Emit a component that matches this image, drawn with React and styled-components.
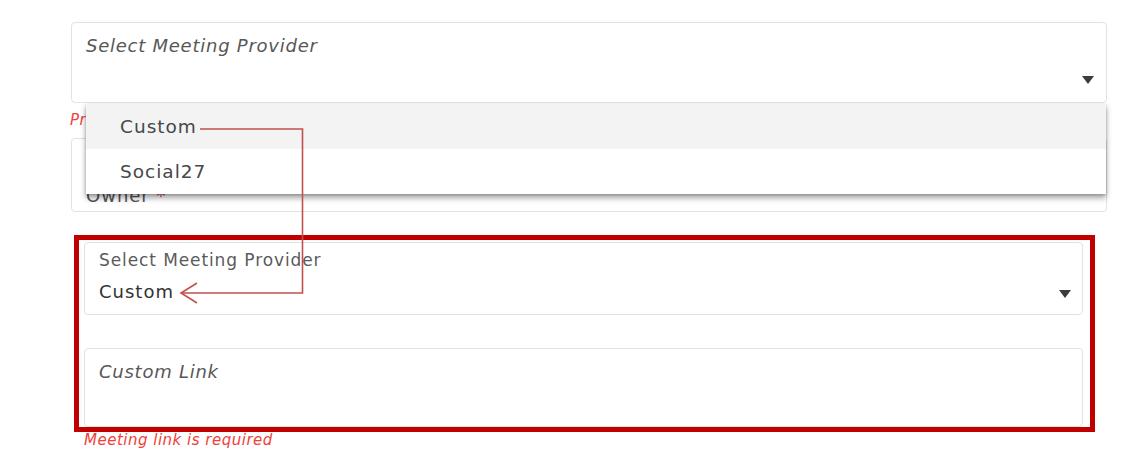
import styled, { createGlobalStyle } from "styled-components";

const GlobalStyle = createGlobalStyle`
  html, body {
    margin: 0;
    padding: 0;
    background: #ffffff;
  }
  body {
    font-family: "DejaVu Sans", "Open Sans", sans-serif;
  }
`;

const Page = styled.main`
  position: relative;
  width: 1143px;
  height: 468px;
  overflow: hidden;
  padding: 22px 0 0 71px;
  box-sizing: border-box;
`;

const Form = styled.div`
  width: 1036px;
  display: flex;
  flex-direction: column;
`;

const Field = styled.div`
  position: relative;
  box-sizing: border-box;
  height: ${(p) => p.$height}px;
  border: 1px solid #e2e2e2;
  border-radius: 4px;
  padding: ${(p) => p.$padTop}px 15px 0 14px;
  background: #fff;
`;

const Placeholder = styled.div`
  font-style: italic;
  font-size: 18px;
  letter-spacing: 0.75px;
  color: #575757;
  line-height: 24px;
`;

const Label = styled.div`
  font-size: 17px;
  letter-spacing: 0.9px;
  color: #5a5a5a;
  line-height: 22px;
`;

const Value = styled.div`
  font-size: 18px;
  letter-spacing: 1px;
  color: #333;
  line-height: 24px;
  margin-top: 9px;
`;

const Caret = styled.span`
  position: absolute;
  right: ${(p) => p.$right}px;
  top: ${(p) => p.$top}px;
  width: 0;
  height: 0;
  border-left: 6px solid transparent;
  border-right: 6px solid transparent;
  border-top: 8px solid #3c3c3c;
`;

const ErrorText = styled.div`
  font-style: italic;
  font-size: 15px;
  letter-spacing: 0.5px;
  color: #f0413a;
  line-height: 20px;
  margin: ${(p) => p.$margin};
`;

const OwnerText = styled.div`
  position: absolute;
  left: 14px;
  bottom: 3px;
  font-size: 18px;
  letter-spacing: 1px;
  color: #555;
  line-height: 24px;

  span {
    color: #e53935;
  }
`;

const Highlight = styled.section`
  box-sizing: border-box;
  width: 1021px;
  margin: 23px 0 0 3px;
  border: 5px solid #c00000;
  padding: 2px 7px 0 5px;
  display: flex;
  flex-direction: column;
  gap: 33px;
  height: 197px;
`;

const Menu = styled.ul`
  position: absolute;
  left: 86px;
  top: 104px;
  width: 1020px;
  margin: 0;
  padding: 0;
  list-style: none;
  background: #fff;
  box-shadow: 0 4px 6px rgba(0, 0, 0, 0.35), 0 1px 3px rgba(0, 0, 0, 0.2);
  z-index: 2;
`;

const MenuItem = styled.li`
  height: 45px;
  display: flex;
  align-items: center;
  padding-left: 34px;
  font-size: 18.5px;
  letter-spacing: 1px;
  color: #484848;
  background: ${(p) => (p.$active ? "#f3f3f3" : "#fff")};
`;

const Pointer = styled.svg`
  position: absolute;
  left: 0;
  top: 0;
  z-index: 3;
  pointer-events: none;
`;

export default function App() {
  return (
    <>
      <GlobalStyle />
      <Page>
        <Form>
          <Field $height={81} $padTop={11}>
            <Placeholder>Select Meeting Provider</Placeholder>
            <Caret $right={12} $top={53} />
          </Field>
          <ErrorText $margin="7px 0 8px -1px">Provider is required</ErrorText>
          <Field $height={74} $padTop={0}>
            <OwnerText>
              Owner <span>*</span>
            </OwnerText>
          </Field>

          <Highlight>
            <Field $height={74} $padTop={6}>
              <Label>Select Meeting Provider</Label>
              <Value>Custom</Value>
              <Caret $right={11} $top={47} />
            </Field>
            <Field $height={80} $padTop={11}>
              <Placeholder>Custom Link</Placeholder>
            </Field>
          </Highlight>
          <ErrorText $margin="-2px 0 0 13px">Meeting link is required</ErrorText>
        </Form>

        <Menu>
          <MenuItem $active>Custom</MenuItem>
          <MenuItem>Social27</MenuItem>
        </Menu>

        <Pointer width="1143" height="468" viewBox="0 0 1143 468">
          <polyline
            points="200,129 302.5,129 302.5,293 181,293"
            fill="none"
            stroke="#c0504d"
            strokeWidth="1.6"
          />
          <polyline
            points="197,283 181,293 197,303"
            fill="none"
            stroke="#c0504d"
            strokeWidth="1.6"
          />
        </Pointer>
      </Page>
    </>
  );
}
